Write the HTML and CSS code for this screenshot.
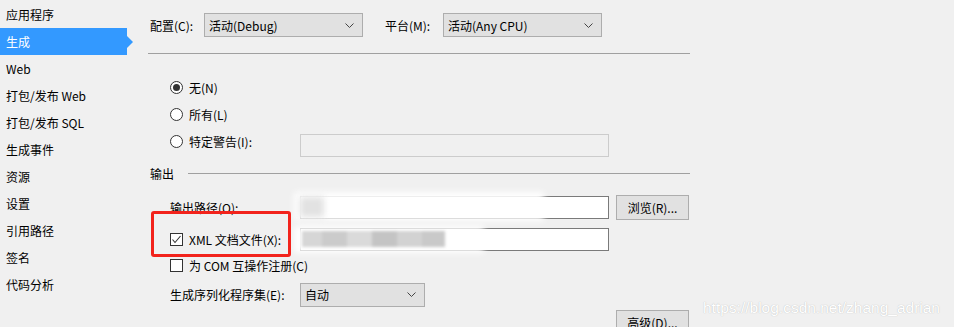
FILE: index.html
```html
<!DOCTYPE html>
<html lang="zh-CN">

<head>
    <meta charset="UTF-8">
    <title>生成</title>
    <link rel="stylesheet" href="styles.css">
</head>

<body>
    <div class="page">
        <ul class="nav">
            <li>应用程序</li>
            <li class="active">生成</li>
            <li>Web</li>
            <li>打包/发布 Web</li>
            <li>打包/发布 SQL</li>
            <li>生成事件</li>
            <li>资源</li>
            <li>设置</li>
            <li>引用路径</li>
            <li>签名</li>
            <li>代码分析</li>
        </ul>

        <div class="main">
            <div class="config-row">
                <span class="cfg-label">配置(C):</span>
                <div class="combo wide">
                    <span>活动(Debug)</span>
                    <svg class="chev" width="9" height="5" viewBox="0 0 9 5"><path d="M0.5 0.5 L4.5 4.5 L8.5 0.5" fill="none" stroke="#444" stroke-width="1"/></svg>
                </div>
                <span class="cfg-label plat">平台(M):</span>
                <div class="combo wide">
                    <span>活动(Any CPU)</span>
                    <svg class="chev" width="9" height="5" viewBox="0 0 9 5"><path d="M0.5 0.5 L4.5 4.5 L8.5 0.5" fill="none" stroke="#444" stroke-width="1"/></svg>
                </div>
            </div>
            <div class="top-rule"></div>

            <div class="radios">
                <div class="radio-row">
                    <span class="radio checked"></span>
                    <span>无(N)</span>
                </div>
                <div class="radio-row">
                    <span class="radio"></span>
                    <span>所有(L)</span>
                </div>
                <div class="radio-row">
                    <span class="radio"></span>
                    <span class="lbl-111">特定警告(I):</span>
                    <div class="textbox disabled"></div>
                </div>
            </div>

            <div class="group-head">
                <span>输出</span>
                <span class="line"></span>
            </div>

            <div class="outputs">
                <div class="out-row">
                    <span class="lbl-130">输出路径(O):</span>
                    <div class="textbox"></div>
                    <div class="button">浏览(R)...</div>
                </div>
                <div class="out-row row-xml">
                    <span class="check checked">
                        <svg width="11" height="11" viewBox="0 0 11 11"><path d="M1.5 5.5 L4 8.5 L9.5 2" fill="none" stroke="#333" stroke-width="1.1"/></svg>
                    </span>
                    <span class="lbl-111">XML 文档文件(X):</span>
                    <div class="textbox"></div>
                </div>
                <div class="out-row row-com">
                    <span class="check"></span>
                    <span>为 COM 互操作注册(C)</span>
                </div>
                <div class="out-row row-ser">
                    <span class="lbl-130">生成序列化程序集(E):</span>
                    <div class="combo small">
                        <span>自动</span>
                        <svg class="chev" width="9" height="5" viewBox="0 0 9 5"><path d="M0.5 0.5 L4.5 4.5 L8.5 0.5" fill="none" stroke="#444" stroke-width="1"/></svg>
                    </div>
                </div>
                <div class="out-row row-adv">
                    <div class="button">高级(D)...</div>
                </div>
            </div>
        </div>

        <!-- blurred paths and annotation on top -->
        <div class="blur blur-a"></div>
        <div class="blur blur-a-dot"></div>
        <div class="blur blur-b"></div>
        <div class="blur blur-b-mosaic"></div>
        <div class="highlight"></div>
        <div class="watermark">https://blog.csdn.net/zhang_adrian</div>
    </div>
</body>

</html>
```

FILE: styles.css
```css
body {
    margin: 0;
    background-color: #f0f0f0;
    font-family: "Noto Sans CJK SC", "Noto Sans", sans-serif;
    font-size: 12px;
    color: #000;
}

.page {
    position: relative;
    display: flex;
    width: 954px;
    height: 327px;
    overflow: hidden;
}

/* left navigation */

.nav {
    list-style: none;
    margin: 0;
    padding: 1px 0 0 0;
    width: 127px;
    flex-shrink: 0;
}

.nav li {
    position: relative;
    height: 27px;
    line-height: 27px;
    padding-left: 6px;
}

.nav li.active {
    background-color: #3399ff;
    color: #fff;
}

.nav li.active::after {
    content: "";
    position: absolute;
    left: 127px;
    top: 8px;
    border-left: 6px solid #3399ff;
    border-top: 6px solid transparent;
    border-bottom: 6px solid transparent;
}

/* main panel */

.main {
    margin-left: 13px;
    padding: 13px 0 0 10px;
    width: 540px;
}

.config-row {
    display: flex;
    align-items: center;
    height: 24px;
}

.cfg-label {
    width: 54px;
}

.cfg-label.plat {
    margin-left: 22px;
    width: 58px;
}

.combo {
    box-sizing: border-box;
    display: flex;
    align-items: center;
    justify-content: space-between;
    height: 24px;
    padding: 0 8px 0 4px;
    background-color: #e1e1e1;
    border: 1px solid #adadad;
}

.combo.wide {
    width: 159px;
}

.combo.small {
    width: 125px;
}

.chev {
    display: block;
}

.top-rule {
    margin: 16px 0 0 -2px;
    width: 542px;
    height: 1px;
    background-color: #a0a0a0;
}

.radios {
    margin-top: 20px;
    padding-left: 20px;
}

.radio-row {
    display: flex;
    align-items: center;
    height: 27px;
}

.radio {
    box-sizing: border-box;
    display: flex;
    align-items: center;
    justify-content: center;
    width: 13px;
    height: 13px;
    margin-right: 6px;
    border: 1px solid #333;
    border-radius: 50%;
    background-color: #fff;
}

.radio.checked::after {
    content: "";
    width: 7px;
    height: 7px;
    border-radius: 50%;
    background-color: #333;
}

.lbl-111 {
    width: 111px;
}

.lbl-130 {
    width: 130px;
}

.textbox {
    box-sizing: border-box;
    width: 309px;
    height: 23px;
    background-color: #fff;
    border: 1px solid #7a7a7a;
}

.textbox.disabled {
    align-self: flex-start;
    margin-top: 6px;
    background-color: #f0f0f0;
    border-color: #cccccc;
}

.group-head {
    display: flex;
    align-items: center;
    height: 22px;
    margin-top: 7px;
}

.group-head .line {
    flex: 1;
    height: 1px;
    margin-left: 14px;
    background-color: #a0a0a0;
}

.outputs {
    margin-top: 11px;
    padding-left: 20px;
}

.out-row {
    display: flex;
    align-items: center;
    height: 25px;
}

.row-xml {
    margin-top: 7px;
}

.row-com {
    margin-top: 1px;
}

.row-ser {
    margin-top: 4px;
}

.row-adv {
    margin-top: 3px;
    padding-left: 446px;
}

.check {
    box-sizing: border-box;
    display: flex;
    align-items: center;
    justify-content: center;
    width: 13px;
    height: 13px;
    margin-right: 6px;
    border: 1px solid #333;
    background-color: #fff;
}

.button {
    box-sizing: border-box;
    display: flex;
    align-items: center;
    justify-content: center;
    width: 73px;
    height: 25px;
    background-color: #e1e1e1;
    border: 1px solid #adadad;
}

.out-row .textbox + .button {
    margin-left: 7px;
}

/* overlays */

.blur {
    position: absolute;
}

.blur-a {
    left: 294px;
    top: 192px;
    width: 250px;
    height: 29px;
    background-color: rgba(255, 255, 255, 0.95);
    filter: blur(3px);
}

.blur-a-dot {
    left: 300px;
    top: 197px;
    width: 24px;
    height: 20px;
    background-color: #e2e2e2;
    filter: blur(3px);
}

.blur-b {
    left: 294px;
    top: 226px;
    width: 190px;
    height: 27px;
    background-color: rgba(255, 255, 255, 0.95);
    filter: blur(3px);
}

.blur-b-mosaic {
    left: 302px;
    top: 231px;
    width: 143px;
    height: 16px;
    background: linear-gradient(90deg, #d6d6d6 0, #d6d6d6 20px, #cbcbcb 20px, #cbcbcb 45px, #dadada 45px, #dadada 70px, #c4c4c4 70px, #c4c4c4 95px, #d2d2d2 95px, #d2d2d2 120px, #c9c9c9 120px);
    filter: blur(1.5px);
}

.highlight {
    position: absolute;
    left: 151px;
    top: 211px;
    width: 140px;
    height: 46px;
    box-sizing: border-box;
    border: 3px solid #f2231c;
    border-radius: 3px;
}

.watermark {
    position: absolute;
    left: 703px;
    top: 298px;
    font-family: "Liberation Sans", Arial, sans-serif;
    font-size: 15.5px;
    line-height: 20px;
    white-space: nowrap;
    color: #fff;
    text-shadow: 0 0 1px rgba(150, 150, 150, 0.7);
}
```
